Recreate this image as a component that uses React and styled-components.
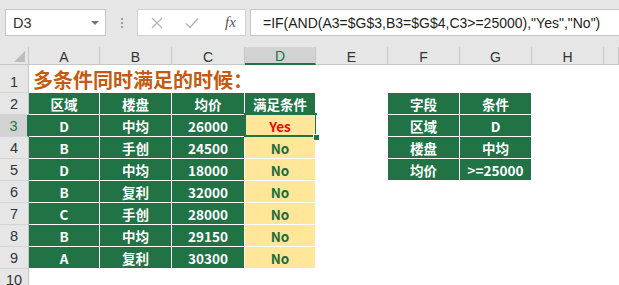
import React from "react";
import styled, { createGlobalStyle, css } from "styled-components";

const GREEN = "#217346";
const YELLOW = "#ffe699";

const GlobalStyle = createGlobalStyle`
    html, body {
        margin: 0;
        padding: 0;
        background: #ffffff;
        overflow: hidden;
    }
`;

const Window = styled.div`
    width: 619px;
    height: 285px;
    display: flex;
    flex-direction: column;
    background: #ffffff;
    overflow: hidden;
    font-family: "Liberation Sans", Arial, sans-serif;
`;

const Toolbar = styled.div`
    height: 47px;
    flex: none;
    display: flex;
    align-items: flex-start;
    padding-top: 9px;
    box-sizing: border-box;
    background: #e6e6e6;
`;

const NameBox = styled.div`
    margin-left: 5px;
    width: 101px;
    height: 27px;
    box-sizing: border-box;
    border: 1px solid #c6c6c6;
    background: #ffffff;
    display: flex;
    align-items: center;
    justify-content: space-between;
    padding: 0 6px 0 7px;
    font-size: 14.5px;
    color: #333333;
`;

const DropArrow = styled.span`
    width: 0;
    height: 0;
    border-left: 4px solid transparent;
    border-right: 4px solid transparent;
    border-top: 4px solid #777777;
`;

const Grip = styled.div`
    width: 31px;
    height: 27px;
    display: flex;
    flex-direction: column;
    align-items: center;
    justify-content: center;
    gap: 2px;
    span {
        width: 2px;
        height: 2px;
        background: #a0a0a0;
    }
`;

const FxButtons = styled.div`
    width: 109px;
    height: 27px;
    box-sizing: border-box;
    border: 1px solid #d0d0d0;
    background: #ffffff;
    display: flex;
    align-items: center;
    padding-left: 13px;
    gap: 22px;
`;

const FxLabel = styled.span`
    font-family: "Liberation Serif", "Times New Roman", serif;
    font-style: italic;
    font-size: 15px;
    color: #555555;
    margin-left: 4px;
`;

const FormulaInput = styled.div`
    margin-left: 4px;
    flex: 1;
    height: 27px;
    box-sizing: border-box;
    border: 1px solid #c6c6c6;
    border-right: none;
    background: #ffffff;
    display: flex;
    align-items: center;
    padding-left: 12px;
    font-size: 14px;
    color: #222222;
    white-space: nowrap;
    overflow: hidden;
`;

const Sheet = styled.div`
    flex: none;
    height: 238px;
    display: grid;
    grid-template-columns: 29px 71px 72px 73px 71px 72px 72px 72px 72px 1fr;
    grid-template-rows: 18px 28px repeat(9, 22px);
    overflow: hidden;
`;

const Corner = styled.div`
    background: #e6e6e6;
    border-right: 1px solid #c6c6c6;
    border-bottom: 1px solid #c6c6c6;
    box-sizing: border-box;
    display: flex;
    align-items: flex-end;
    justify-content: flex-end;
    padding: 0 3px 2px 0;
`;

const CornerTriangle = styled.span`
    width: 0;
    height: 0;
    border-left: 11px solid transparent;
    border-bottom: 11px solid #bdbdbd;
`;

const ColHead = styled.div`
    background: ${(p) => (p.$active ? "#d2d2d2" : "#e6e6e6")};
    color: ${(p) => (p.$active ? GREEN : "#333333")};
    border-right: 1px solid #c6c6c6;
    border-bottom: ${(p) => (p.$active ? `2px solid ${GREEN}` : "1px solid #c6c6c6")};
    box-sizing: border-box;
    display: flex;
    align-items: center;
    justify-content: center;
    font-size: 14px;
    padding-top: 2px;
`;

const RowHead = styled.div`
    background: ${(p) => (p.$active ? "#d2d2d2" : "#e6e6e6")};
    color: ${(p) => (p.$active ? GREEN : "#333333")};
    border-right: ${(p) => (p.$active ? `2px solid ${GREEN}` : "1px solid #c6c6c6")};
    border-bottom: 1px solid #d4d4d4;
    box-sizing: border-box;
    display: flex;
    align-items: flex-end;
    justify-content: center;
    font-size: 14.5px;
    line-height: 14px;
    padding-bottom: 3px;
`;

const filled = (bg, color) => css`
    background: ${bg};
    color: ${color};
    border-right: 1px solid #ffffff;
    border-bottom: 1px solid #ffffff;
`;

const fills = {
    head: filled(GREEN, "#ffffff"),
    body: filled(GREEN, "#ffffff"),
    yes: filled(YELLOW, "#ff0000"),
    no: filled(YELLOW, "#1d6b3e"),
    empty: css`
        background: #ffffff;
    `,
};

const Cell = styled.div`
    position: relative;
    box-sizing: border-box;
    display: flex;
    align-items: center;
    justify-content: center;
    font-family: "Noto Sans CJK SC", "Noto Sans", sans-serif;
    font-weight: 700;
    font-size: 13.5px;
    white-space: nowrap;
    ${(p) => fills[p.$kind]}
`;

const Title = styled.div`
    grid-column: 2 / span 6;
    display: flex;
    align-items: center;
    padding-left: 4px;
    padding-top: 1px;
    font-family: "Noto Sans CJK SC", sans-serif;
    font-weight: 700;
    font-size: 20px;
    color: #c55a11;
    white-space: nowrap;
`;

const Selection = styled.span`
    position: absolute;
    top: -2px;
    left: -1px;
    right: -2px;
    bottom: -1px;
    border: 2px solid ${GREEN};
    pointer-events: none;
`;

const FillHandle = styled.span`
    position: absolute;
    right: -5px;
    bottom: -5px;
    width: 5px;
    height: 5px;
    background: ${GREEN};
    border: 1px solid #ffffff;
    z-index: 3;
`;

const cols = ["A", "B", "C", "D", "E", "F", "G", "H", ""];

const mainTable = [
    ["区域", "楼盘", "均价", "满足条件"],
    ["D", "中均", "26000", "Yes"],
    ["B", "手创", "24500", "No"],
    ["D", "中均", "18000", "No"],
    ["B", "复利", "32000", "No"],
    ["C", "手创", "28000", "No"],
    ["B", "中均", "29150", "No"],
    ["A", "复利", "30300", "No"],
];

const condTable = [
    ["字段", "条件"],
    ["区域", "D"],
    ["楼盘", "中均"],
    ["均价", ">=25000"],
];

// r: sheet row 2..10, c: column 0..8 (A..I)
const cellFor = (r, c) => {
    const i = r - 2;
    if (c < 4 && i < mainTable.length) {
        const text = mainTable[i][c];
        if (i === 0) return { text, kind: "head" };
        if (c === 3) return { text, kind: text === "Yes" ? "yes" : "no" };
        return { text, kind: "body" };
    }
    if ((c === 5 || c === 6) && i < condTable.length) {
        return { text: condTable[i][c - 5], kind: "body" };
    }
    return { text: "", kind: "empty" };
};

const CloseIcon = () => (
    <svg width="12" height="12" viewBox="0 0 12 12">
        <path d="M1 1 L11 11 M11 1 L1 11" stroke="#b4b4b4" strokeWidth="1.3" fill="none" />
    </svg>
);

const CheckIcon = () => (
    <svg width="14" height="12" viewBox="0 0 14 12">
        <path d="M1 6.5 L5 10.5 L13 1.5" stroke="#b4b4b4" strokeWidth="1.5" fill="none" />
    </svg>
);

const App = () => {
    const rows = [2, 3, 4, 5, 6, 7, 8, 9, 10];
    return (
        <Window>
            <GlobalStyle />
            <Toolbar>
                <NameBox>
                    <span>D3</span>
                    <DropArrow />
                </NameBox>
                <Grip>
                    <span />
                    <span />
                    <span />
                </Grip>
                <FxButtons>
                    <CloseIcon />
                    <CheckIcon />
                    <FxLabel>fx</FxLabel>
                </FxButtons>
                <FormulaInput>=IF(AND(A3=$G$3,B3=$G$4,C3&gt;=25000),"Yes","No")</FormulaInput>
            </Toolbar>
            <Sheet>
                <Corner>
                    <CornerTriangle />
                </Corner>
                {cols.map((c, idx) => (
                    <ColHead key={idx} $active={c === "D"}>
                        {c}
                    </ColHead>
                ))}

                <RowHead>1</RowHead>
                <Title>多条件同时满足的时候：</Title>
                <Cell $kind="empty" />
                <Cell $kind="empty" />
                <Cell $kind="empty" />

                {rows.map((r) => (
                    <React.Fragment key={r}>
                        <RowHead $active={r === 3}>{r}</RowHead>
                        {cols.map((_, c) => {
                            const cell = cellFor(r, c);
                            const selected = r === 3 && c === 3;
                            return (
                                <Cell key={c} $kind={cell.kind}>
                                    {cell.text}
                                    {selected && (
                                        <>
                                            <Selection />
                                            <FillHandle />
                                        </>
                                    )}
                                </Cell>
                            );
                        })}
                    </React.Fragment>
                ))}
            </Sheet>
        </Window>
    );
};

export default App;
